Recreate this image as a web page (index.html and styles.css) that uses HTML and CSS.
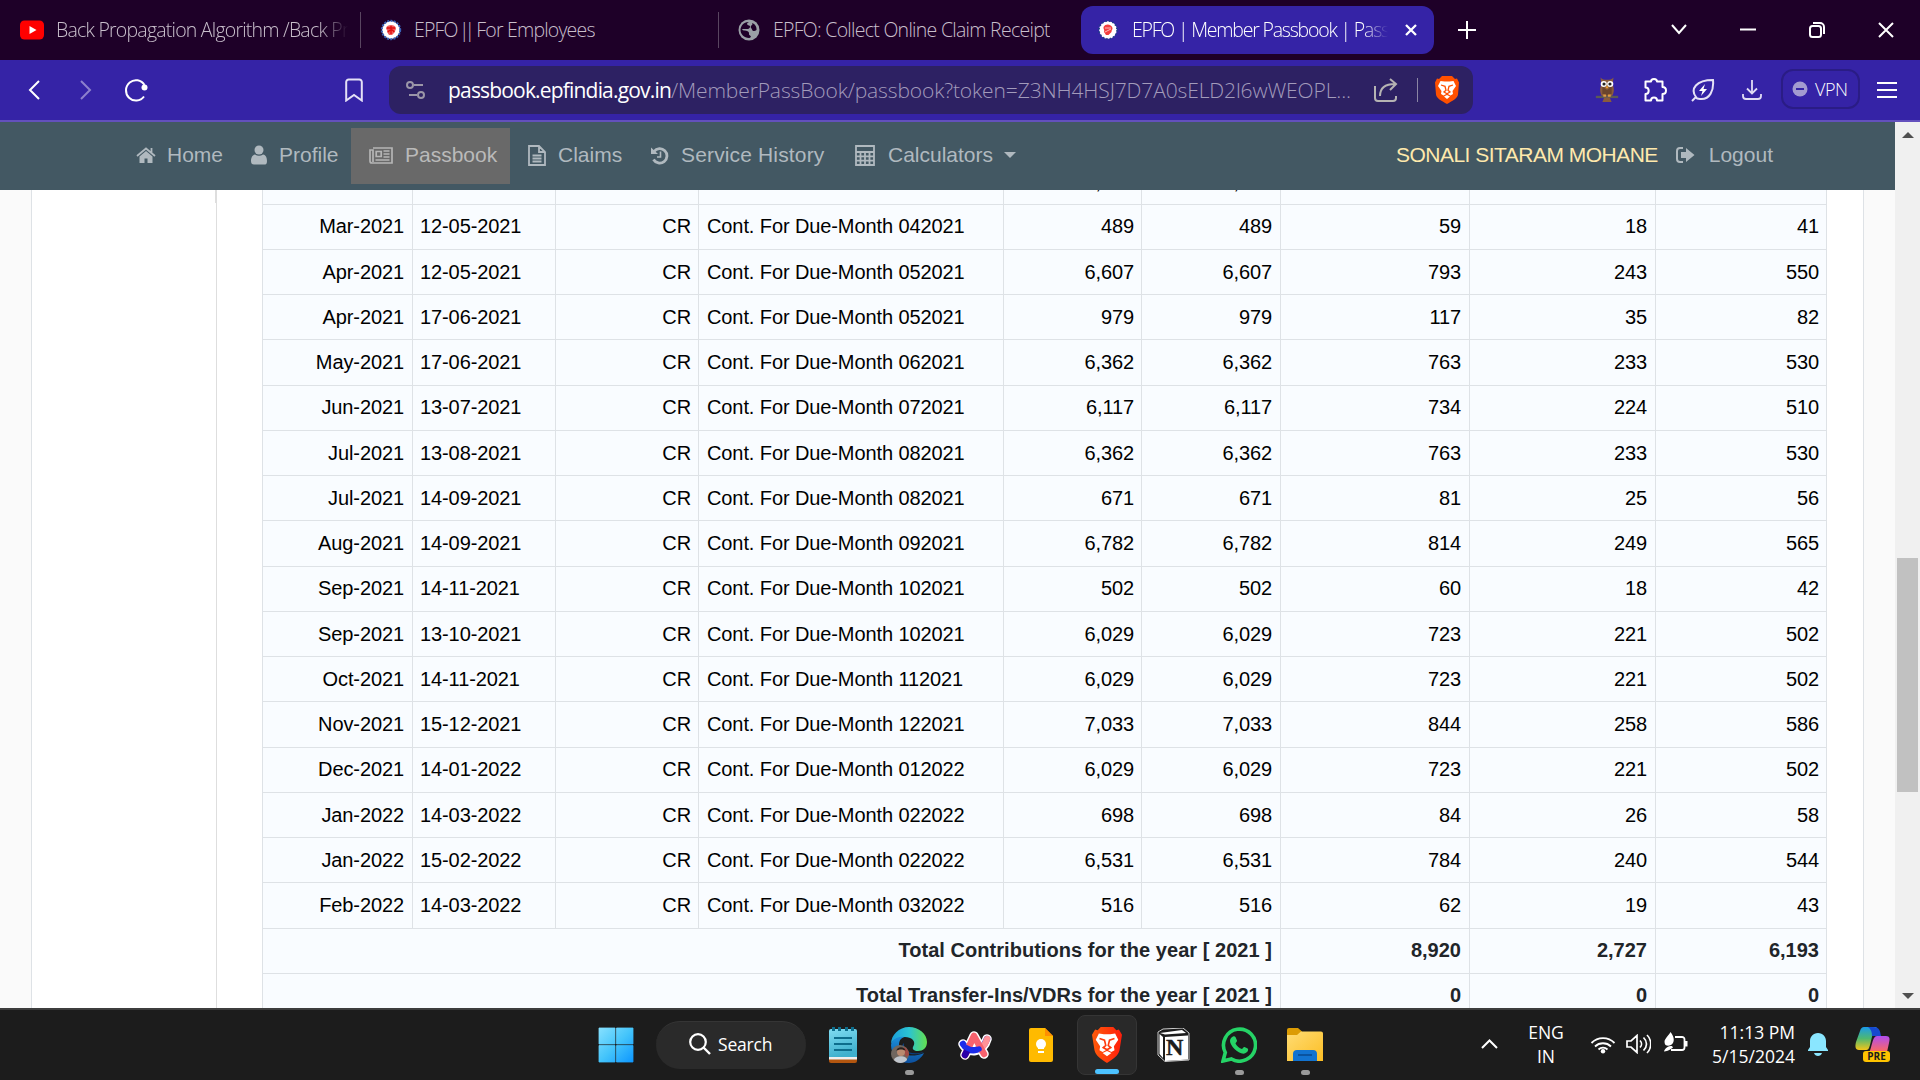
FILE: index.html
```html
<!DOCTYPE html>
<html lang="en">
<head>
<meta charset="utf-8">
<title>EPFO | Member Passbook</title>
<link rel="stylesheet" href="styles.css">
</head>
<body>
<div class="screen">
  <div class="tabs">
    <div class="tab tab-1">
      <svg class="ico" width="24" height="20" viewBox="0 0 24 20"><rect width="24" height="19" y="0.5" rx="4.5" fill="#f00"/><path d="M9.5 6v8l7-4z" fill="#fff"/></svg>
      <span class="tab-text fade w1">Back Propagation Algorithm /Back Pr</span>
    </div>
    <div class="tab tab-2">
      <svg class="ico" width="22" height="22" viewBox="0 0 22 22"><circle cx="11" cy="11" r="9" fill="#fff" stroke="#3a62b8" stroke-width="2.4" stroke-dasharray="2 1.2"/><circle cx="11" cy="11" r="8.300" fill="#fff"/><path d="M6 9c1-4 9-4 10 0 0 2-1 2-1 4l-3 3H9l-2-3c1-2-1-2-1-4z" fill="#f25a5a"/><path d="M7 9h8M11 7v8M8 13c2-3 5-3 6 0" stroke="#d11" fill="none" stroke-width="1.4"/></svg>
      <span class="tab-text w2">EPFO <span class="bars">||</span> For Employees</span>
    </div>
    <div class="tab tab-3">
      <svg class="ico" width="22" height="22" viewBox="0 0 22 22"><circle cx="11" cy="11" r="10.5" fill="#9aa0a6"/><path d="M11 3c-3 1-2 3 0 3.500s1 3-1 3.500H4.500C3 12 8 11 10 12.500s0 3 2 4 0 2.500-1 2.500c-5 0-8.500-4-8.500-8S6 2.500 11 3zM14 4c3 1 5 4 4.500 7-2 2-4 1-4.500-.5s-2-2-1-3.500 2-1 1-3z" fill="#1e0028"/></svg>
      <span class="tab-text w3">EPFO: Collect Online Claim Receipt</span>
    </div>
    <div class="tab tab-active">
      <svg class="ico" width="22" height="22" viewBox="0 0 22 22"><circle cx="11" cy="11" r="8.800" fill="#fff" stroke="#1f3f8a" stroke-width="2.400" stroke-dasharray="1.500 2"/><circle cx="11" cy="11" r="8.300" fill="#fff"/><path d="M6.500 8c2-4 8-3 9 1 0 2-1 2-1 4l-3 3H9l-2-3c1-2-1-3-.5-5z" fill="#f33f3f"/><path d="M8 9h6M8 13l6-3" stroke="#fbb" fill="none"/></svg>
      <span class="tab-text fade w4">EPFO | Member Passbook | Passb</span>
      <svg class="ico close" width="12" height="12" viewBox="0 0 12 12"><path d="M1 1l10 10M11 1L1 11" stroke="#fff" stroke-width="2.300"/></svg>
    </div>
    <svg class="ico plus" width="18" height="18" viewBox="0 0 18 18"><path d="M9 0v18M0 9h18" stroke="#fff" stroke-width="2"/></svg>
    <div class="window-buttons">
      <svg width="16" height="16" viewBox="0 0 16 16"><path d="M1 3l7 8 7-8" /></svg>
      <svg width="16" height="16" viewBox="0 0 16 16"><path d="M0 7.500h16"/></svg>
      <svg width="16" height="16" viewBox="0 0 16 16"><rect x="1" y="4" width="11" height="11" rx="2.500"/><path d="M4 1h7a4 4 0 0 1 4 4v7"/></svg>
      <svg width="16" height="16" viewBox="0 0 16 16"><path d="M1 1l14 14M15 1L1 15"/></svg>
    </div>
  </div>

  <div class="toolbar">
    <svg class="nav-ico" width="12" height="20" viewBox="0 0 12 20"><path d="M11 1L2 10l9 9" stroke="#fff" stroke-width="2"/></svg>
    <svg class="nav-ico fwd" width="12" height="20" viewBox="0 0 12 20"><path d="M1 1l9 9-9 9" stroke="#8d81cd" stroke-width="2"/></svg>
    <svg class="nav-ico reload" width="24" height="24" viewBox="0 0 24 24"><path d="M20 18.500A10 10.200 0 1 1 20.500 7" stroke="#fff" stroke-width="2"/><circle cx="20.500" cy="9.500" r="3" fill="#fff"/></svg>
    <svg class="nav-ico mark" width="18" height="24" viewBox="0 0 18 24"><path d="M1.200 4a2.500 2.500 0 0 1 2.500-2.500h10.600A2.500 2.500 0 0 1 16.800 4v18.500L9 17l-7.800 5.500z" stroke="#e4e0f6" stroke-width="2"/></svg>
    <div class="url">
      <svg class="nav-ico" width="20" height="18" viewBox="0 0 20 18"><g stroke="#9b96a8" stroke-width="2"><circle cx="4" cy="4" r="3"/><path d="M8 4h9M3 14h8"/><circle cx="15" cy="14" r="3"/></g></svg>
      <span class="url-text"><b>passbook.epfindia.gov.in</b>/MemberPassBook/passbook?token=Z3NH4HSJ7D7A0sELD2l6wWEOPL...</span>
      <svg class="nav-ico share" width="24" height="24" viewBox="0 0 24 24"><path d="M1 8v12a3 3 0 0 0 3 3h15a3 3 0 0 0 3-3v-2M6 18c0-8 5-12 15-12M16 1l6 5-6 6" stroke="#b5b3b3" stroke-width="2"/></svg>
      <i class="url-sep"></i>
      <svg class="nav-ico lion" width="24" height="28" viewBox="0 0 24 28"><path d="M7 0h10l3 3 2-.5 2 4-1 12c-.5 4-6 6.500-11 9.500C7 25 1.500 22.500 1 18.500L0 6.500l2-4 2 .5z" fill="#ff5000"/><path d="M5.500 5l4 .6h5l4-.6 2.500 5-3.500 5 .5 3-2.500 1.500-3.500-2-3.500 2L6 18l.5-3L3 10zM9 20.500l3-1.600 3 1.600-3 2.500z" fill="#fff"/><path d="M6 9l4 1.300 1 4-2 1.700 3 1.700 3-1.700-2-1.700 1-4L18 9" stroke="#ff5000" stroke-width="1.300"/></svg>
    </div>
    <div class="extensions">
      <svg class="nav-ico" width="24" height="26" viewBox="0 0 24 28"><path d="M5 0.500c2 2.500 4 2.500 7 2.500s5 0 7-2.500l-1 7.500c2 4 2 9-1 13H7C4 17 4 12 6 8z" fill="#8a5b3c"/><path d="M7 10l5 4 5-4v8l-5 2-5-2z" fill="#6b452d"/><circle cx="8.500" cy="7.500" r="3.300" fill="#fff"/><circle cx="15.500" cy="7.500" r="3.300" fill="#fff"/><circle cx="8.800" cy="7.500" r="1.700" fill="#222"/><circle cx="15.200" cy="7.500" r="1.700" fill="#222"/><path d="M12 9l1.500 3h-3z" fill="#f0a030"/><path d="M0 21.500h24" stroke="#5b5a55" stroke-width="2.500"/><path d="M9 22h6l2 5H7z" fill="#8a5b3c"/><path d="M8 20h3M13 20h3" stroke="#e09a40" stroke-width="2.500"/></svg>
      <svg class="nav-ico" width="24" height="24" viewBox="0 0 24 24"><path d="M2.500 3.500H8C8 1.800 9.500 1 11 1s3 .8 3 2.500h5.500V9c2 0 3.500 1.300 3.500 3.500S21.500 16 19.500 16v6.500H14C14 20.500 12.500 19.500 11 19.500s-3 1-3 3H2.500V16c2 0 3.200-1.500 3.200-3.200S4.500 9.500 2.500 9.500z" stroke="#fff" stroke-width="2" stroke-linejoin="round"/></svg>
      <svg class="nav-ico" width="24" height="24" viewBox="0 0 24 24"><path d="M1 23l4-4c-6-8 0-17 17-17 1 10-3 20-13 19-2 0-4-1-5-2" stroke="#e6e2f6" stroke-width="2"/><path d="M14 6l-6 7h3.500L10 18l6-7h-3.500z" fill="#fff"/></svg>
      <svg class="nav-ico" width="20" height="20" viewBox="0 0 20 20"><path d="M10 0v13M5 8.500l5 5 5-5M1 14v2a3 3 0 0 0 3 3h12a3 3 0 0 0 3-3v-2" stroke="#e0dcf4" stroke-width="1.800"/></svg>
    </div>
    <div class="vpn"><svg width="16" height="16" viewBox="0 0 16 16"><circle cx="8" cy="8" r="7.500" fill="#a39bd0"/><path d="M4 8h8" stroke="#3523a6" stroke-width="2"/></svg><span>VPN</span></div>
    <svg class="nav-ico menu" width="20" height="16" viewBox="0 0 20 16"><path d="M0 1h20M0 8h20M0 15h20" stroke="#fff" stroke-width="1.800"/></svg>
  </div>

  <div class="page">
    <div class="content">
      <nav class="site-nav">
        <span class="item home"><svg width="20" height="17" viewBox="0 0 20 17"><path d="M10 4l6.500 5.500V16h-5v-4.500h-3V16h-5V9.500z"/><path d="M1 9l9-7.500L19 9M15.500 1v5" fill="none" stroke="#b0b9bf" stroke-width="1.800"/></svg><span class="t1">Home</span></span>
        <span class="item profile"><svg width="16" height="20" viewBox="0 0 16 20"><circle cx="8" cy="5" r="4.500"/><path d="M4 9.500c2.500 1.600 5.500 1.600 8 0 3 .5 4 3.500 4 6.500s-1 3.500-3 3.500H3c-2 0-3-1-3-3.500s1-6 4-6.500z"/></svg><span class="t2">Profile</span></span>
        <span class="item passbook"><svg width="24" height="17" viewBox="0 0 24 17"><path d="M4 1h19v15H3a2 2 0 0 1-2-2V3h3v12" fill="none" stroke="#b5b5b5" stroke-width="1.700"/><path d="M7.200 4.500h5v5h-5z" fill="none" stroke="#b5b5b5" stroke-width="1.700"/><path d="M14.500 4h6M14.500 7h6M14.500 10h6M6.500 13h14" stroke="#b5b5b5" stroke-width="1.500"/></svg><span class="t3">Passbook</span></span>
        <span class="item claims"><svg width="18" height="21" viewBox="0 0 18 21"><path d="M1 1h10l6 6v13H1zM11 1v6h6M4.500 10.500h9M4.500 13.500h9M4.500 16.500h9" fill="none" stroke="#b0b9bf" stroke-width="1.800"/></svg><span class="t4">Claims</span></span>
        <span class="item history"><svg width="18" height="19" viewBox="0 0 18 19"><path d="M3 5.500a7.200 7.200 0 1 1-.5 8" fill="none" stroke="#b0b9bf" stroke-width="2.800"/><path d="M0 1.500v6.500h7z"/><path d="M9.500 5.500V11H6" fill="none" stroke="#b0b9bf" stroke-width="1.600"/></svg><span class="t5">Service History</span></span>
        <span class="item calc"><svg width="20" height="21" viewBox="0 0 20 21"><path d="M1 1h18v19H1zM1 7h18M1 11.300h18M1 15.600h18M5.500 7v13M10 7v13M14.500 7v13" fill="none" stroke="#b0b9bf" stroke-width="1.800"/></svg><span class="t6">Calculators</span><i class="caret"></i></span>
        <span class="item user"><span>SONALI SITARAM MOHANE</span></span>
        <span class="item logout"><svg width="19" height="16" viewBox="0 0 19 16"><path d="M7 1H4a3 3 0 0 0-3 3v8a3 3 0 0 0 3 3h3" fill="none" stroke="#b0b9bf" stroke-width="2"/><path d="M5 5h5V1l8.500 7L10 15v-4H5z"/></svg><span class="t7">Logout</span></span>
      </nav>
      <div class="body">
        <div class="gutter"></div>
        <div class="side"><div class="side-box"></div></div>
        <div class="main">
          <div class="table" id="table"></div>
        </div>
        <div class="gutter-right"></div>
      </div>
    </div>
    <div class="scroll"><i class="up"></i><i class="thumb"></i><i class="down"></i></div>
  </div>

  <div class="taskbar">
    <div class="apps">
      <svg class="win" width="36" height="36" viewBox="0 0 36 36"><defs><linearGradient id="w" x1="0" y1="0" x2="36" y2="36" gradientUnits="userSpaceOnUse"><stop offset="0" stop-color="#8ae2ff"/><stop offset=".5" stop-color="#45c5fb"/><stop offset="1" stop-color="#0a94ff"/></linearGradient></defs><path d="M1 1h16v16H1zM18.500 1H35v16H18.500zM1 18.500h16V35H1zM18.500 18.500H35V35H18.500z" fill="url(#w)" stroke="url(#w)" stroke-linejoin="round" stroke-width=".8"/></svg>
      <div class="search"><svg width="22" height="22" viewBox="0 0 22 22"><circle cx="9" cy="9" r="7.800" fill="none" stroke="#fff" stroke-width="2.200"/><path d="M14.500 14.500L21 21" stroke="#fff" stroke-width="2.400"/></svg><span>Search</span></div>
      <div class="app a1"><svg width="28" height="36" viewBox="0 0 28 36"><defs><linearGradient id="n" x2="0.300" y2="1"><stop offset="0" stop-color="#7fdcf2"/><stop offset="1" stop-color="#3fb0cd"/></linearGradient></defs><path d="M0 28h28v6a2 2 0 0 1-2 2H2a2 2 0 0 1-2-2z" fill="#b3560f"/><path d="M0 26h28v6.500H0z" fill="#eee"/><path d="M0 4a2 2 0 0 1 2-2h24a2 2 0 0 1 2 2v26H0z" fill="url(#n)"/><path d="M5 11h18M5 17h18M5 23h18" stroke="#0d6d8c" stroke-width="2"/><path d="M4.500 0v4M10.500 0v4M17.500 0v4M23.500 0v4" stroke="#0d6d8c" stroke-width="3"/></svg></div>
      <div class="app a2"><svg width="36" height="36" viewBox="0 0 36 36"><defs><linearGradient id="e1" x1="0" x2="1"><stop offset="0" stop-color="#1b9fdc"/><stop offset=".5" stop-color="#2bc3d2"/><stop offset="1" stop-color="#63e04f"/></linearGradient><linearGradient id="e2" x2="0" y2="1"><stop offset="0" stop-color="#1b8fdb"/><stop offset="1" stop-color="#0c4f9e"/></linearGradient></defs><path d="M0 17C0 8 8 0 18 0s18 7 18 15c0 6-4 9-9 9-4 0-6-2-5-4 4-6-2-10-8-10C7 10 2 13 0 17z" fill="url(#e1)"/><path d="M0 18c1-5 6-9 13-8-5 2-6 7-4 12 3 6 11 9 24 4-3 6-9 10-15 10C8 36 0 28 0 18z" fill="url(#e2)"/><path d="M13 16c-1 7 5 13 20 9-7 4-21 3-22-5 0-2 1-3 2-4z" fill="#0a3f80"/><circle cx="9" cy="27" r="9" fill="#70665f"/><path d="M13 20c3 1 5 4 5 8l-3 2-2-4z" fill="#a04a44"/><circle cx="10" cy="25" r="4" fill="#b98a70"/><path d="M5.500 24c0-5 9-5 9 0-2-2-7-2-9 0z" fill="#2b211e"/><path d="M3 33c1-5 13-5 13 0-3 4-10 4-13 0z" fill="#c0c5cc"/></svg><i class="dot"></i></div>
      <div class="app a3"><svg width="34" height="30" viewBox="0 0 34 30"><g fill="none" stroke-linecap="round" stroke-linejoin="round"><path d="M7 25L16 6l10 18M5 14c5 10 20 9 24-5" stroke="#fff" stroke-width="9.500"/><path d="M5 14c5 9 19 9 24-5" stroke="#1a2bea" stroke-width="6.500"/><path d="M22 19c4-3 6-6 7-10" stroke="#ff9298" stroke-width="6.500"/><path d="M7 25l9-19 10 18" stroke="#f8626e" stroke-width="6.500"/><path d="M7 25l2-4" stroke="#2a00a8" stroke-width="6.500"/><path d="M9 18c4 2.500 8 2.500 12 1" stroke="#1a2bea" stroke-width="5.500"/></g></svg></div>
      <div class="app a4"><svg width="24" height="34" viewBox="0 0 24 34"><path d="M2 0h14l8 8v24a2 2 0 0 1-2 2H2a2 2 0 0 1-2-2V2a2 2 0 0 1 2-2z" fill="#ffba00"/><path d="M16 0l8 8h-8z" fill="#ff9000"/><circle cx="12" cy="16" r="5" fill="#fff"/><path d="M9 20h6M9 24h6" stroke="#fff" stroke-width="2"/></svg></div>
      <div class="app a5"><svg width="30" height="36" viewBox="0 0 24 28" preserveAspectRatio="none"><defs><linearGradient id="br" x2="1"><stop offset="0" stop-color="#ff5b0a"/><stop offset="1" stop-color="#ff1e0c"/></linearGradient></defs><path d="M7 0h10l2.500 2.500 2-.5 2.500 4-2 12c-.7 4-5 6.500-10 10-5-3.500-9.300-6-10-10L0 6l2.500-4 2 .5z" fill="url(#br)"/><path d="M5.500 5l4 .6h5l4-.6 2.500 5-3.500 5 .5 3-2.500 1.500-3.500-2-3.500 2L6 18l.5-3L3 10zM8.500 20.200l3.500-1.600 3.500 1.600-3.500 2.500z" fill="#fff"/><path d="M6 9l4 1.300 1 4-2 1.700 3 1.700 3-1.700-2-1.700 1-4L18 9" stroke="#ff3a0c" stroke-width="1.300" fill="none"/></svg><i class="dot active"></i></div>
      <div class="app a6"><svg width="33" height="34" viewBox="0 0 33 34"><path d="M1 4l5-3 20-1 6 5v27l-24 1.500L1 27z" fill="#1c1c1c" stroke="#ccc"/><path d="M3 5l22-3 4 3-21 1.500z" fill="#fff"/><path d="M8 9l23-1.500v24L8 33z" fill="#fff"/><path d="M2.500 6L6 9v21l-3.500-4z" fill="#fff"/></svg><b class="notion-n">N</b></div>
      <div class="app a7"><svg width="36" height="36" viewBox="0 0 36 36"><path d="M2 34l2.300-8.500A16 16 0 1 1 10.500 32z" fill="none" stroke="#25d366" stroke-width="3.600"/><path d="M12 9.500c1-.6 2-.4 2.600.8l1.400 3.300c.3.900-1.200 2.200-1.500 2.800 1.600 3 3.800 4.700 6.500 5.700.8-.8 1.700-2.300 2.500-2 1.200.4 3.500 1.500 3.600 2.200.3 2.300-2.400 4.400-4.600 4.400C16.500 26.500 9 18.500 9 14c0-2 1.300-3.800 3-4.500z" fill="#25d366"/></svg><i class="dot"></i></div>
      <div class="app a8"><svg width="36" height="33" viewBox="0 0 36 33"><defs><linearGradient id="f" x2="1" y2="1"><stop offset="0" stop-color="#ffdc74"/><stop offset="1" stop-color="#fcbe24"/></linearGradient></defs><path d="M0 2a2 2 0 0 1 2-2h9l4 3.500L11 8H0z" fill="#dc9c04"/><path d="M0 7h10l4-3.500h20a2 2 0 0 1 2 2V33H0z" fill="url(#f)"/><path d="M6 33v-7a4 4 0 0 1 4-4h16a4 4 0 0 1 4 4v7z" fill="#1273d0"/><path d="M11 27h14" stroke="#0a4c92" stroke-width="1.600"/></svg><i class="dot"></i></div>
    </div>
    <div class="tray">
      <svg class="chev" width="17" height="10" viewBox="0 0 17 10"><path d="M1 9l7.500-7.500L16 9" fill="none" stroke="#fff" stroke-width="2"/></svg>
      <div class="lang">ENG<br>IN</div>
      <svg class="wifi" width="26" height="19" viewBox="0 0 26 19"><g fill="none" stroke="#fff" stroke-width="1.800"><path d="M1.500 8a16 16 0 0 1 23 0M5 11.500a11.500 11.500 0 0 1 16 0M8.500 14.500a6.500 6.500 0 0 1 9 0"/></g><circle cx="13" cy="16.300" r="2.200" fill="#fff"/></svg>
      <svg class="vol" width="25" height="20" viewBox="0 0 25 20"><path d="M1 7h4l6-5.500v17L5 13H1zM14 6.500c2 2 2 5 0 7M17.500 3.500c4 4 4 9 0 13M21 1c5 5 5 13 0 18" fill="none" stroke="#fff" stroke-width="1.700"/></svg>
      <svg class="bat" width="25" height="22" viewBox="0 0 25 22"><path d="M12 5h7a2.500 2.500 0 0 1 2.500 2.500v8A2.500 2.500 0 0 1 19 18H8" fill="none" stroke="#fff" stroke-width="1.800"/><path d="M22 9h2.500v5.500H22z" fill="#fff"/><path d="M7.500 0c4 5 4.500 10 .5 13-2 1-4 1-5.500 0C-.5 8 4 6 7.500 0zM1 19.500c2 0 5-1 9-4l-1-1.500c-4 0-7 2-8 5.500z" fill="#fff"/></svg>
      <div class="clock">11:13 PM<br>5/15/2024</div>
      <svg class="bell" width="20" height="23" viewBox="0 0 20 23"><path d="M10 0c5 0 8 4 8 8v6l2 3v1H0v-1l2-3V8c0-4 3-8 8-8zM6 20h8c-1 4-7 4-8 0z" fill="#8ae6ff"/></svg>
      <div class="copilot"><svg width="35" height="25" viewBox="0 0 35 25"><defs><linearGradient id="c1" x2="0" y2="1"><stop offset="0" stop-color="#1a9bea"/><stop offset=".5" stop-color="#4fb870"/><stop offset="1" stop-color="#f5c518"/></linearGradient><linearGradient id="c2" x2="0" y2="1"><stop offset="0" stop-color="#b04df0"/><stop offset="1" stop-color="#ff6a5c"/></linearGradient></defs><path d="M9 0h13c-5 3-5 13-8 21-1 2-2 2-4 2H4c-4 0-4-4-3-8L5 4c1-3 2-4 4-4z" fill="url(#c1)"/><path d="M18 0c6 0 7 3 8 9h-9c0-4-1-7-4-9z" fill="#1749cf"/><path d="M22 9h9c4 0 4 3 3 7l-2 9H14c3-3 3-16 8-16z" fill="url(#c2)"/></svg><span class="pre">PRE</span></div>
    </div>
  </div>
</div>
<script src="table.js"></script>
</body>
</html>
```
FILE: table.js
```js
const rows = [
  ["Mar-2021", "12-05-2021", "042021", "489", "59", "18", "41"],
  ["Apr-2021", "12-05-2021", "052021", "6,607", "793", "243", "550"],
  ["Apr-2021", "17-06-2021", "052021", "979", "117", "35", "82"],
  ["May-2021", "17-06-2021", "062021", "6,362", "763", "233", "530"],
  ["Jun-2021", "13-07-2021", "072021", "6,117", "734", "224", "510"],
  ["Jul-2021", "13-08-2021", "082021", "6,362", "763", "233", "530"],
  ["Jul-2021", "14-09-2021", "082021", "671", "81", "25", "56"],
  ["Aug-2021", "14-09-2021", "092021", "6,782", "814", "249", "565"],
  ["Sep-2021", "14-11-2021", "102021", "502", "60", "18", "42"],
  ["Sep-2021", "13-10-2021", "102021", "6,029", "723", "221", "502"],
  ["Oct-2021", "14-11-2021", "112021", "6,029", "723", "221", "502"],
  ["Nov-2021", "15-12-2021", "122021", "7,033", "844", "258", "586"],
  ["Dec-2021", "14-01-2022", "012022", "6,029", "723", "221", "502"],
  ["Jan-2022", "14-03-2022", "022022", "698", "84", "26", "58"],
  ["Jan-2022", "15-02-2022", "022022", "6,531", "784", "240", "544"],
  ["Feb-2022", "14-03-2022", "032022", "516", "62", "19", "43"]
];

const table = document.getElementById("table");

function addRow(cells, kind) {
  const row = document.createElement("div");
  row.className = "row " + kind;
  cells.forEach(([text, cls]) => {
    const cell = document.createElement("div");
    cell.className = "cell " + (cls || "");
    const label = document.createElement("span");
    label.textContent = text;
    cell.append(label);
    row.append(cell);
  });
  table.append(row);
}

addRow([[""], [""], [""], [""], [",", "near"], [","], [""], [""], [""]], "cut");
rows.forEach(([month, date, due, wage, ee, er, pension]) => {
  addRow([[month], [date, "left date"], ["CR", "near"], ["Cont. For Due-Month " + due, "left desc"], [wage, "near"], [wage], [ee], [er], [pension, "near"]], "entry");
});
addRow([["Total Contributions for the year [ 2021 ]", "span"], ["8,920"], ["2,727"], ["6,193", "near"]], "total");
addRow([["Total Transfer-Ins/VDRs for the year [ 2021 ]", "span"], ["0"], ["0"], ["0", "near"]], "total");
```
FILE: styles.css
```css
* { box-sizing: border-box; }
body { margin: 0; overflow: hidden; font-family: "Liberation Sans", Arial, sans-serif; }
svg { display: block; flex: none; }
.screen { width: 1920px; height: 1080px; display: flex; flex-direction: column; overflow: hidden; }

.tabs { height: 60px; flex: none; background: #1e0028; display: flex; align-items: center; font: 19.500px "Open Sans", "Noto Sans", sans-serif; font-weight: 300; color: #c9bfcc; }
.tab { display: flex; align-items: center; height: 48px; white-space: nowrap; }
.tab-text { overflow: hidden; height: 30px; line-height: 30px; letter-spacing: -0.720px; }
.tab-1 { width: 361px; padding-left: 20px; gap: 12px; }
.tab-2 { width: 359px; padding-left: 19px; gap: 12px; }
.tab-3 { width: 361px; padding-left: 18px; gap: 13px; }
.tab-2::before, .tab-3::before { content: ""; width: 1px; height: 36px; background: #594560; margin-left: -20px; margin-right: 7px; }
.tab-3::before { margin-right: 6px; }
.tab-active { width: 353px; padding-left: 16px; gap: 13px; background: #3523a6; border-radius: 12px; color: #fff; }
.tab-text.w1 { width: 292px; letter-spacing: -0.780px; }
.tab-text.w2 { letter-spacing: -0.800px; }
.bars { letter-spacing: -5px; margin: 0 2px 0 -3px; }
.tab-text.w4 { width: 256px; letter-spacing: -1.200px; }
.fade { -webkit-mask-image: linear-gradient(90deg, #000 90%, transparent 100%); mask-image: linear-gradient(90deg, #000 90%, transparent 100%); }
.close { margin-left: 4px; }
.plus { margin-left: 24px; }
.window-buttons { margin-left: auto; display: flex; gap: 53px; padding-right: 26px; }
.window-buttons svg { fill: none; stroke: #fff; stroke-width: 2; }

.toolbar { height: 62px; flex: none; background: #3523a6; border-bottom: 2px solid #6350bd; display: flex; align-items: center; padding-left: 28px; }
.nav-ico { fill: none; }
.fwd { margin-left: 40px; }
.reload { margin-left: 32px; }
.mark { margin-left: 197px; }
.url { margin-left: 26px; width: 1084px; height: 48px; border-radius: 12px; background: #2d2163; display: flex; align-items: center; padding-left: 17px; }
.url-text { margin-left: 22px; width: 906px; white-space: nowrap; font: 300 21px/30px "Open Sans", "Noto Sans", sans-serif; letter-spacing: -0.120px; color: #a29bbb; }
.url-text b { font-weight: 400; letter-spacing: -0.820px; color: #fff; }
.share { margin-left: 20px; }
.url-sep { width: 1px; height: 24px; background: #8b85a4; margin: 0 17px 0 19px; }
.extensions { display: flex; align-items: center; width: 170px; margin-left: 122px; gap: 24px; }
.extensions svg:last-child { margin-left: 3px; }
.vpn { margin-left: 16px; width: 79px; height: 40px; margin-top: -2px; border: 2px solid #2a1c85; border-radius: 12px; display: flex; align-items: center; gap: 7px; padding-left: 9px; color: #fff; font: 300 18px "Open Sans", sans-serif; letter-spacing: -0.500px; flex: none; }
.menu { margin-left: 17px; }

.page { height: 886px; flex: none; display: flex; }
.content { width: 1895px; display: flex; flex-direction: column; overflow: hidden; }
.site-nav { height: 68px; flex: none; background: #435863; display: flex; align-items: center; padding-left: 136px; color: #b0b9bf; font-size: 21px; }
.item { display: flex; align-items: center; height: 56px; white-space: nowrap; }
.item svg { fill: #b0b9bf; }
.item svg, .item > span { margin-top: -2px; }
.home { width: 115px; gap: 11px; }
.profile { width: 100px; gap: 12px; }
.passbook { width: 159px; gap: 12px; padding-left: 18px; background: #696969; color: #bababa; }
.claims { width: 141px; gap: 12px; padding-left: 18px; }
.history { width: 204px; gap: 12px; }
.t5 { letter-spacing: 0.150px; }
.calc { gap: 13px; }
.caret { border: 6px solid transparent; border-top-color: #b0b9bf; border-bottom: 0; margin-top: -3px; margin-left: -2px; }
.user { margin-left: auto; color: #ffe9ac; letter-spacing: -0.520px; }
.logout { gap: 14px; margin-left: 18px; padding-right: 122px; }

.body { flex: 1; min-height: 0; display: flex; overflow: hidden; }
.gutter { width: 32px; background: #fafafa; border-right: 1px solid #dee2e6; }
.side { width: 185px; background: #fff; border-right: 1px solid #dedede; }
.side-box { height: 13px; border-right: 1px solid #dedede; }
.main { width: 1647px; background: #fff; border-right: 1px solid #dee2e6; padding-left: 45px; }
.gutter-right { flex: 1; background: #fafafa; }
.table { width: 1565px; background: #f9fcff; border-left: 1px solid #dee2e6; color: #000; font-size: 20px; }
.row { display: grid; grid-template-columns: 150px 143px 143px 305px 138px 139px 189px 186px 171px; height: 45.250px; }
.cell { border-right: 1px solid #dee2e6; border-bottom: 1px solid #dee2e6; display: flex; align-items: center; justify-content: flex-end; padding: 0 8px; white-space: nowrap; overflow: hidden; letter-spacing: -0.100px; }
.cell.near { padding-right: 7px; }
.cell.left { justify-content: flex-start; }
.cell.date { padding-left: 7px; }
.cut { height: 14.700px; }
.cut .cell { align-items: flex-end; padding-bottom: 10px; }
.cut .cell span { margin-right: 33px; }
.total { height: 45px; grid-template-columns: 1018px 189px 186px 171px; font-weight: bold; color: #212529; }
.total .cell { padding-bottom: 1px; letter-spacing: 0; }
.total .span { letter-spacing: 0.040px; }

.scroll { width: 25px; background: #f0f0f0; display: flex; flex-direction: column; align-items: center; }
.up { margin-top: 10px; border: 6px solid transparent; border-bottom-color: #505050; border-top: 0; }
.thumb { margin-top: 420px; width: 21px; height: 234px; background: #c1c1c1; }
.down { margin-top: auto; margin-bottom: 9px; border: 6px solid transparent; border-top-color: #505050; border-bottom: 0; }

.taskbar { flex: 1; background: #1c1c1c; border-top: 2px solid #3d3d3d; display: flex; align-items: center; color: #fff; font-family: "Open Sans", "Noto Sans", sans-serif; }
.apps { display: flex; align-items: center; padding-left: 598px; height: 70px; padding-bottom: 1px; }
.search { margin-left: 22px; margin-right: 7px; width: 150px; height: 48px; border-radius: 24px; background: #2a2a2a; border-top: 1px solid #353535; display: flex; align-items: center; gap: 7px; padding-left: 33px; padding-bottom: 2px; font-size: 17.500px; letter-spacing: -0.200px; }
.app { width: 60px; height: 60px; margin-right: 6px; display: flex; align-items: center; justify-content: center; position: relative; border-radius: 8px; }
.a5 { background: #292929; border: 1px solid #353535; }
.dot { position: absolute; left: 26px; bottom: 0; width: 9px; height: 5px; border-radius: 3px; background: #9a9a9a; }
.dot.active { left: 17px; width: 24px; background: #4cc2ff; }
.notion-n { position: absolute; left: 23px; top: 16px; font: bold 24px/32px "Liberation Serif", serif; color: #1c1c1c; -webkit-text-stroke: 0.500px #1c1c1c; }
.tray { margin-left: auto; display: flex; align-items: center; padding-right: 30px; padding-bottom: 2px; height: 70px; font-size: 17.500px; line-height: 24px; }
.lang { text-align: center; width: 36px; margin-left: 30px; }
.wifi { margin-left: 26px; }
.vol { margin-left: 10px; }
.bat { margin-left: 12px; margin-top: -3px; }
.clock { text-align: right; width: 100px; margin-left: 7px; }
.bell { margin-left: 13px; }
.copilot { position: relative; width: 35px; height: 35px; margin-left: 27px; }
.pre { position: absolute; left: 8px; top: 24px; width: 27px; height: 11px; border-radius: 3px; background: #ffc400; color: #1c1c1c; font: bold 10px/11px "Open Sans", sans-serif; text-align: center; }
```
